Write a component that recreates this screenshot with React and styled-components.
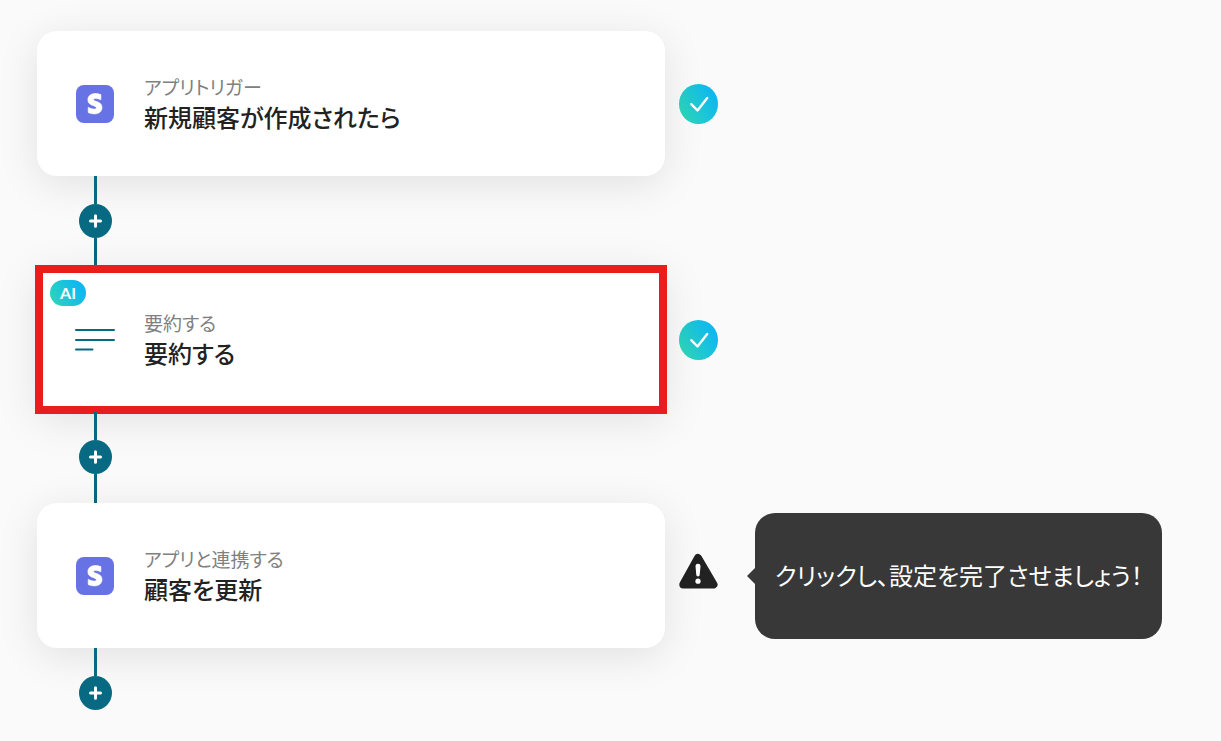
import React from "react";
import styled, { createGlobalStyle } from "styled-components";

const GlobalStyle = createGlobalStyle`
  * {
    box-sizing: border-box;
  }

  body {
    margin: 0;
    background: #fafafa;
    color: #222222;
    font-family: "Noto Sans CJK JP", "Noto Sans", sans-serif;
    font-feature-settings: "palt";
  }
`;

const Flow = styled.main`
  display: flex;
  flex-direction: column;
  padding: 31px 37px 30px;
`;

const StepRow = styled.div`
  display: flex;
  align-items: center;
`;

const Card = styled.section`
  position: relative;
  display: flex;
  align-items: center;
  gap: 27px;
  flex: 0 1 628px;
  min-height: 145px;
  padding: 24px 36px;
  background: #ffffff;
  border-radius: ${({ $selected }) => ($selected ? "0" : "20px")};
  outline: ${({ $selected }) => ($selected ? "8px solid #e91d1d" : "none")};
  outline-offset: -6px;
  box-shadow: 0 8px 40px rgba(0, 0, 0, 0.1);
`;

const IconSlot = styled.div`
  display: flex;
  align-items: center;
  justify-content: center;
  flex: none;
  width: 44px;
  height: 44px;
`;

const Texts = styled.div`
  min-width: 0;
  padding-bottom: 2px;
`;

const Kind = styled.p`
  margin: 0;
  color: #808080;
  font-size: 19px;
  line-height: 28px;
`;

const Title = styled.h2`
  margin: 0;
  font-size: 24px;
  font-weight: 500;
  line-height: 32px;
`;

const AiBadge = styled.span`
  position: absolute;
  top: 13px;
  left: 13px;
  width: 36px;
  height: 26px;
  border-radius: 13px;
  background: linear-gradient(60deg, #2ed8b6, #0fb8ee 80%);
  color: #ffffff;
  font-family: Lato, sans-serif;
  font-size: 16px;
  font-weight: 700;
  line-height: 26px;
  text-align: center;
`;

const Status = styled.div`
  display: flex;
  flex: none;
  margin-left: 14px;
`;

const Connector = styled.div`
  position: relative;
  display: flex;
  flex-direction: column;
  align-items: center;
  width: 33px;
  height: ${({ $last }) => ($last ? "auto" : "91px")};
  margin-left: 42px;
`;

const Line = styled.span`
  flex: ${({ $grow }) => ($grow ? "1" : "0 0 28px")};
  width: 3px;
  background: #086983;
`;

const AddButton = styled.button`
  display: flex;
  align-items: center;
  justify-content: center;
  flex: none;
  width: 33px;
  height: 34px;
  padding: 0;
  border: none;
  border-radius: 50%;
  background: #086983;
  cursor: pointer;
`;

const Tooltip = styled.div`
  position: relative;
  display: flex;
  align-items: center;
  min-height: 126px;
  margin-left: 37px;
  padding: 20px 19px 22px 20px;
  border-radius: 20px;
  background: #383838;
  color: #ffffff;
  font-size: 24px;
  line-height: 34px;

  &::before {
    content: "";
    position: absolute;
    top: 50%;
    left: -8px;
    border: solid transparent;
    border-width: 8px 8px 8px 0;
    border-right-color: #383838;
    transform: translateY(-50%);
  }
`;

const StripeIcon = () => (
  <svg width="38" height="38" viewBox="0 0 38 38">
    <rect width="38" height="38" rx="8" fill="#6772e5" />
    <path
      d="M17.500 14.600c0-.8.7-1.200 1.900-1.200 1.700 0 3.900.6 5.500 1.400V9.600c-1.800-.8-3.700-1.100-5.500-1.100-4.500 0-7.500 2.400-7.500 6.400 0 6.200 8.500 5.200 8.500 7.900 0 .9-.9 1.300-2.100 1.300-1.800 0-4.200-.8-6.100-1.800v5.200c2 1 4.100 1.400 6.100 1.400 4.600 0 7.700-2.300 7.700-6.400 0-6.600-8.500-5.500-8.500-7.900z"
      fill="#ffffff"
      stroke="#ffffff"
      strokeWidth="0.6"
    />
  </svg>
);

const SummaryIcon = () => (
  <svg width="40" height="24" viewBox="0 0 40 24" fill="none" stroke="#086983" strokeWidth="2" strokeLinecap="round">
    <path d="M1 2h38M1 12h38M1 21.500h16.500" />
  </svg>
);

const CheckIcon = ({ id }) => (
  <svg width="39" height="40" viewBox="0 0 39 40" role="img" aria-label="完了">
    <defs>
      <linearGradient id={id} x1="0" y1="0.8" x2="0.9" y2="0.3">
        <stop offset="0" stopColor="#2ed8b6" />
        <stop offset="1" stopColor="#0fb8ee" />
      </linearGradient>
    </defs>
    <ellipse cx="19.5" cy="20" rx="19.5" ry="20" fill={`url(#${id})`} />
    <path
      d="M12.300 20.200l6.200 6.300L28.200 14"
      fill="none"
      stroke="#ffffff"
      strokeWidth="2.400"
      strokeLinecap="round"
      strokeLinejoin="round"
    />
  </svg>
);

const WarningIcon = () => (
  <svg width="39" height="46" viewBox="0 0 39 46" role="img" aria-label="未設定">
    <path
      d="M19 5L34.500 31.500H4.300Z"
      fill="#222222"
      stroke="#222222"
      strokeWidth="8"
      strokeLinejoin="round"
    />
    <path d="M16.500 13q0-2.300 2.500-2.300t2.500 2.300l-.8 9q-.2 1.400-1.700 1.400t-1.700-1.400z" fill="#ffffff" />
    <circle cx="19" cy="28.200" r="2.600" fill="#ffffff" />
  </svg>
);

const steps = [
  { id: "trigger", kind: "アプリトリガー", title: "新規顧客が作成されたら", icon: StripeIcon, done: true },
  { id: "summary", kind: "要約する", title: "要約する", icon: SummaryIcon, done: true, ai: true, selected: true },
  {
    id: "update",
    kind: "アプリと連携する",
    title: "顧客を更新",
    icon: StripeIcon,
    hint: "クリックし、設定を完了させましょう！",
  },
];

const AddStep = ({ last }) => (
  <Connector $last={last}>
    <Line />
    <AddButton type="button" aria-label="ステップを追加">
      <svg width="13" height="14" viewBox="0 0 13 14" stroke="#ffffff" strokeWidth="3" strokeLinecap="round">
        <path d="M6.500 1.700v10.600M1.500 7h10" />
      </svg>
    </AddButton>
    {!last && <Line $grow />}
  </Connector>
);

const App = () => {
  return (
    <>
      <GlobalStyle />
      <Flow>
        {steps.map((step, index) => {
          const Icon = step.icon;
          return (
            <React.Fragment key={step.id}>
              <StepRow>
                <Card $selected={step.selected}>
                  {step.ai && <AiBadge>AI</AiBadge>}
                  <IconSlot>
                    <Icon />
                  </IconSlot>
                  <Texts>
                    <Kind>{step.kind}</Kind>
                    <Title>{step.title}</Title>
                  </Texts>
                </Card>
                <Status>{step.done ? <CheckIcon id={`check-${step.id}`} /> : <WarningIcon />}</Status>
                {step.hint && <Tooltip role="tooltip">{step.hint}</Tooltip>}
              </StepRow>
              <AddStep last={index === steps.length - 1} />
            </React.Fragment>
          );
        })}
      </Flow>
    </>
  );
};

export default App;
